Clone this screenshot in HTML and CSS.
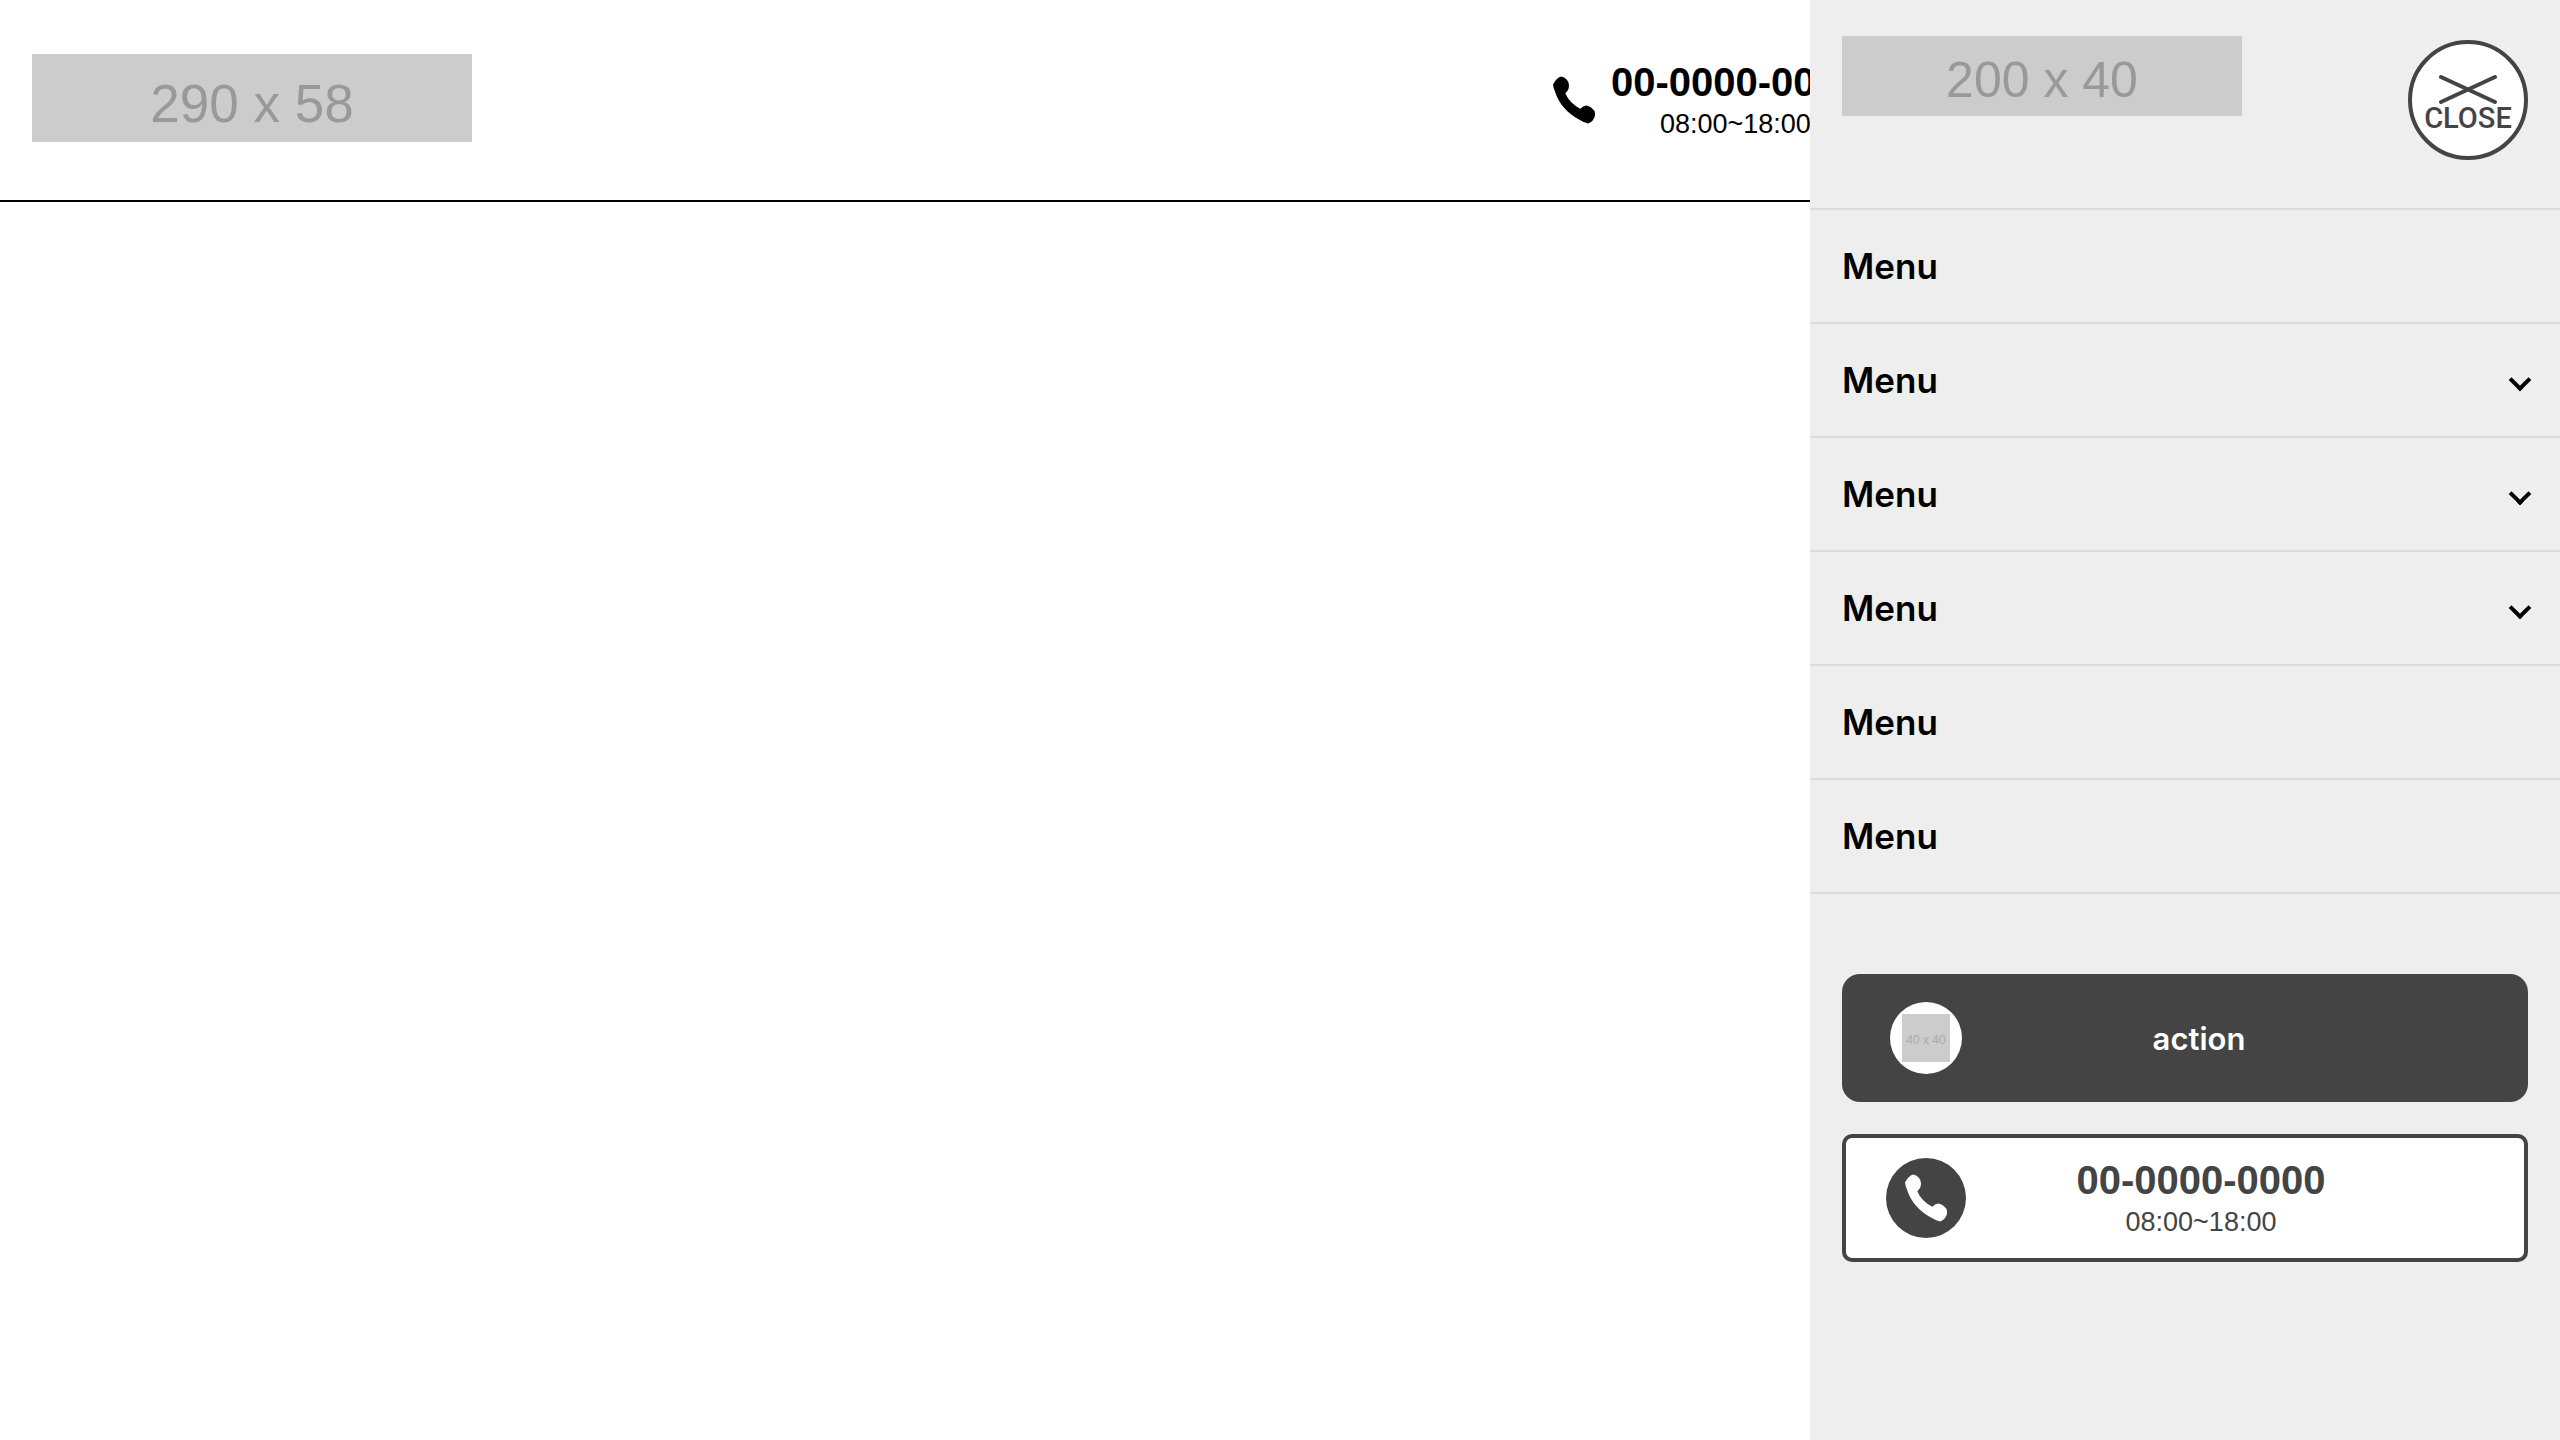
FILE: index.html
```html
<!DOCTYPE html>
<html lang="ja">
<head>
	<meta charset="UTF-8" />
	<meta name="viewport" content="width=device-width, initial-scale=1" />
	<title>Menu</title>
	<link rel="stylesheet" href="styles.css">
</head>
<body>
	<svg class="sprite" aria-hidden="true">
		<symbol id="phone" viewBox="0 0 126 141">
			<path d="M0 24Q10 4 24 0Q34 1 41 9Q48 16 48 27Q48 41 37 50Q48 78 82 97Q92 87 101 87Q113 89 123 101Q127 106 126 118Q122 135 105 141Q92 138 79 130Q22 98 6 45Q1 34 0 24Z" />
		</symbol>
	</svg>
	<header class="header">
		<a href="#" class="logo">290 x 58</a>
		<a href="tel:0000000000" class="header_tel">
			<svg class="icon_phone"><use href="#phone" /></svg>
			<span class="tel">
				<span class="tel_num">00-0000-0000</span>
				<span class="tel_time">08:00~18:00</span>
			</span>
		</a>
	</header>
	<div class="drawer">
		<div class="drawer_head">
			<a href="#" class="drawer_logo">200 x 40</a>
			<button type="button" class="close">
				<svg class="close_icon" viewBox="0 0 60 30">
					<path d="M3 3L57 28M57 3L3 28" />
				</svg>
				<span>CLOSE</span>
			</button>
		</div>
		<nav>
			<ul class="menu">
				<li><a href="#">Menu</a></li>
				<li><a href="#" class="has_child">Menu</a></li>
				<li><a href="#" class="has_child">Menu</a></li>
				<li><a href="#" class="has_child">Menu</a></li>
				<li><a href="#">Menu</a></li>
				<li><a href="#">Menu</a></li>
			</ul>
		</nav>
		<div class="buttons">
			<a href="#" class="btn btn_action">
				<span class="btn_icon"><span class="thumb">40 x 40</span></span>
				<span class="btn_text">action</span>
			</a>
			<a href="tel:0000000000" class="btn btn_tel">
				<span class="btn_icon"><svg class="icon_phone"><use href="#phone" /></svg></span>
				<span class="tel">
					<span class="tel_num">00-0000-0000</span>
					<span class="tel_time">08:00~18:00</span>
				</span>
			</a>
		</div>
	</div>
</body>
</html>
```
FILE: styles.css
```css
*,*:after {
	box-sizing: border-box;
}
body,ul {
	margin: 0;
	padding: 0;
}
body {
	background-color: #fff;
	color: #000;
	font-family: Inter, "Noto Sans CJK JP", sans-serif;
}
ul {
	list-style: none;
}
a {
	color: inherit;
	text-decoration: none;
}
.sprite {
	display: none;
}

/* header */
.header {
	display: flex;
	justify-content: space-between;
	align-items: flex-start;
	padding: 54px 700px 58px 32px;
	border-bottom: 2px solid #000;
}
.logo,.drawer_logo,.thumb,.tel {
	font-family: "Liberation Sans", Arial, sans-serif;
}
.logo,.drawer_logo,.thumb {
	display: flex;
	align-items: center;
	justify-content: center;
	background-color: #ccc;
	color: #999;
}
.logo {
	width: 440px;
	height: 88px;
	padding-top: 10px;
	font-size: 53px;
}
.header_tel {
	display: flex;
	align-items: center;
	gap: 16px;
	padding-top: 4px;
}
.icon_phone {
	width: 42px;
	height: 48px;
	fill: currentColor;
}
.tel {
	display: flex;
	flex-direction: column;
	align-items: center;
}
.tel_num {
	font-size: 40px;
	font-weight: 600;
	line-height: 48px;
}
.tel_time {
	font-size: 27px;
	line-height: 36px;
}

/* drawer */
.drawer {
	position: fixed;
	top: 0;
	right: 0;
	bottom: 0;
	width: 750px;
	overflow: auto;
	background-color: #eee;
}
.drawer_head {
	display: flex;
	justify-content: space-between;
	align-items: flex-start;
	padding: 36px 32px 48px;
}
.drawer_logo {
	width: 400px;
	height: 80px;
	padding-top: 8px;
	font-size: 50px;
}
.close {
	display: flex;
	flex-direction: column;
	align-items: center;
	width: 120px;
	height: 120px;
	margin-top: 4px;
	padding: 30px 0 0;
	border: 4px solid #444;
	border-radius: 50%;
	background-color: #fff;
	color: #444;
	font-family: Roboto, sans-serif;
	font-size: 29px;
	font-weight: 500;
	line-height: 28px;
	cursor: pointer;
}
.close_icon {
	width: 60px;
	height: 30px;
	fill: none;
	stroke: #444;
	stroke-width: 4;
	stroke-linecap: round;
}
.menu {
	border-top: 2px solid #ddd;
}
.menu li {
	border-bottom: 2px solid #ddd;
}
.menu a {
	display: flex;
	align-items: center;
	justify-content: space-between;
	height: 112px;
	padding: 0 32px;
	font-size: 35px;
	font-weight: 600;
}
.has_child:after {
	content: "";
	width: 16px;
	height: 16px;
	border-right: 4px solid #000;
	border-bottom: 4px solid #000;
	transform: rotate(45deg);
}

/* buttons */
.buttons {
	display: grid;
	gap: 32px;
	padding: 80px 32px;
}
.btn {
	display: grid;
	grid-template-columns: 80px 1fr;
	align-items: center;
	justify-items: center;
	height: 128px;
	padding: 0 96px 0 44px;
}
.btn_icon {
	display: flex;
	align-items: center;
	justify-content: center;
	border-radius: 50%;
}
.btn_action {
	border-radius: 18px;
	background-color: #444;
	color: #fff;
	font-size: 31px;
	font-weight: 600;
}
.btn_action .btn_icon {
	width: 72px;
	height: 72px;
	background-color: #fff;
}
.thumb {
	width: 48px;
	height: 48px;
	padding-top: 4px;
	color: #aaa;
	font-size: 12px;
	font-weight: 400;
}
.btn_tel {
	padding: 0 88px 0 40px;
	border: 4px solid #444;
	border-radius: 10px;
	background-color: #fff;
	color: #444;
}
.btn_tel .btn_icon {
	width: 80px;
	height: 80px;
	background-color: #444;
	color: #fff;
}
```
